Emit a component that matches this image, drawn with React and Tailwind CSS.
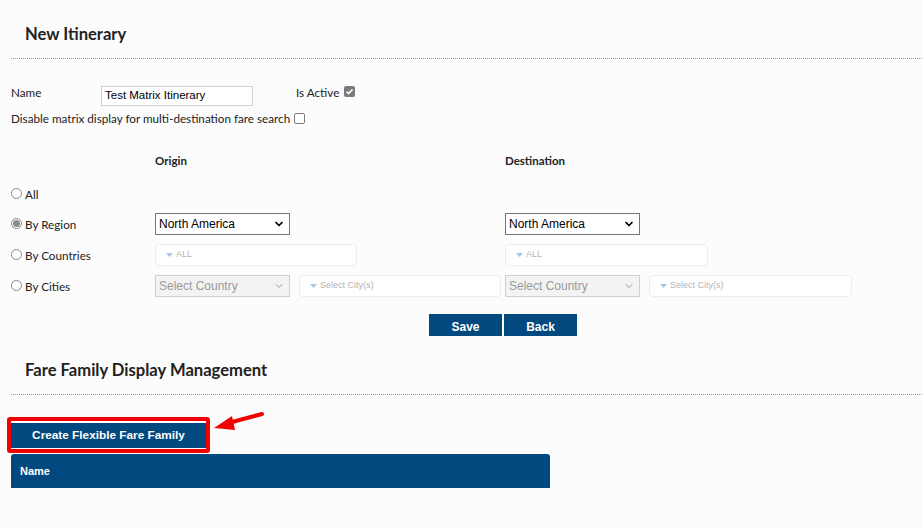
import { ChevronDown } from 'lucide-react';

const lato = { fontFamily: 'Lato, "Open Sans", sans-serif' };
const arial = { fontFamily: '"Liberation Sans", Arial, sans-serif' };

function Radio({ checked }) {
  return (
    <span className="w-[11px] h-[11px] rounded-full border border-[#8a8a8a] bg-white flex items-center justify-center shrink-0">
      {checked && <span className="w-[7px] h-[7px] rounded-full bg-[#8c8c8c]" />}
    </span>
  );
}

function Check({ checked }) {
  if (checked) {
    return (
      <span className="w-[11px] h-[11px] rounded-[2px] bg-[#7b7b7b] flex items-center justify-center shrink-0">
        <svg width="9" height="9" viewBox="0 0 10 10">
          <path d="M1.8 5.2 L4 7.4 L8.4 2.6" fill="none" stroke="white" strokeWidth="1.8" />
        </svg>
      </span>
    );
  }
  return <span className="w-[11px] h-[11px] rounded-[2px] border border-[#7b7b7b] bg-white shrink-0" />;
}

function Select({ value, disabled }) {
  return (
    <div
      style={arial}
      className={
        disabled
          ? 'w-[135px] h-[22px] border border-[#cfcfcf] bg-[#f3f3f3] flex items-center justify-between pl-[3px] pr-[4px] text-[12px] text-[#9a9a9a]'
          : 'w-[135px] h-[22px] border border-[#767676] bg-white flex items-center justify-between pl-[3px] pr-[4px] text-[12px] text-black'
      }
    >
      <span>{value}</span>
      <ChevronDown size={12} strokeWidth={disabled ? 2 : 3.5} className={disabled ? 'text-[#9a9a9a]' : 'text-black'} />
    </div>
  );
}

function Multi({ text, w }) {
  return (
    <div style={arial} className={`${w} h-[22px] border border-[#ececec] rounded-[4px] bg-white flex items-center pl-[10px] gap-[3px] text-[9px] text-[#b4b4b4]`}>
      <svg width="7" height="5" viewBox="0 0 7 5">
        <path d="M0 0 H7 L3.5 4 Z" fill="#a8c6e6" />
      </svg>
      <span>{text}</span>
    </div>
  );
}

function Row({ label, checked, top, children }) {
  return (
    <div className={`flex items-center h-[22px] ${top}`}>
      <div className="w-[144px] flex items-center gap-[3px] text-[11.7px] text-[#222]">
        <Radio checked={checked} />
        <span className="mt-[2px]">{label}</span>
      </div>
      {children}
    </div>
  );
}

export default function App() {
  return (
    <div style={lato} className="relative w-[922px] h-[529px] bg-[#fcfcfc] overflow-hidden text-[#222]">
      {/* New Itinerary */}
      <h2 className="pl-[25px] pt-[24px] text-[16.6px] leading-[20px] font-bold text-[#222]">New Itinerary</h2>
      <div className="ml-[11px] mt-[14px] border-t border-dotted border-[#9a9a9a]" />

      <div className="pl-[11px]">
        <div className="flex items-start mt-[27px] h-[20px]">
          <span className="w-[90px] text-[11.7px] leading-[16px] -mt-[2px]">Name</span>
          <div style={arial} className="w-[152px] h-[20px] border border-[#cfcfcf] bg-white flex items-center pl-[3px] text-[11.5px] text-black">
            Test Matrix Itinerary
          </div>
          <div className="ml-[43px] flex items-center gap-[5px] text-[11.7px] leading-[12px] -mt-[1px]">
            <span className="mt-[1px]">Is Active</span>
            <Check checked />
          </div>
        </div>
        <div className="flex items-center gap-[4px] mt-[6px] text-[11.7px] leading-[12px]">
          <span>Disable matrix display for multi-destination fare search</span>
          <Check />
        </div>

        {/* Origin / Destination */}
        <div className="flex mt-[29px] h-[16px] items-center text-[11.5px] font-bold">
          <span className="w-[144px]" />
          <span className="w-[350px]">Origin</span>
          <span>Destination</span>
        </div>

        <Row label="All" top="mt-[14px]" />

        <Row label="By Region" checked top="mt-[8px]">
          <div className="w-[350px]">
            <Select value="North America" />
          </div>
          <Select value="North America" />
        </Row>

        <Row label="By Countries" top="mt-[9px]">
          <div className="w-[350px]">
            <Multi text="ALL" w="w-[202px]" />
          </div>
          <Multi text="ALL" w="w-[203px]" />
        </Row>

        <Row label="By Cities" top="mt-[9px]">
          <div className="w-[350px] flex gap-[9px]">
            <Select value="Select Country" disabled />
            <Multi text="Select City(s)" w="w-[202px]" />
          </div>
          <div className="flex gap-[9px]">
            <Select value="Select Country" disabled />
            <Multi text="Select City(s)" w="w-[203px]" />
          </div>
        </Row>

        <div style={arial} className="flex gap-[2px] mt-[17px] ml-[418px] text-[12px] font-bold text-white">
          <button className="w-[73px] h-[22px] bg-[#02497f] pt-[4px]">Save</button>
          <button className="w-[73px] h-[22px] bg-[#02497f] pt-[4px]">Back</button>
        </div>
      </div>

      {/* Fare Family Display Management */}
      <h2 className="pl-[25px] mt-[24px] text-[16.6px] leading-[20px] font-bold text-[#222]">Fare Family Display Management</h2>
      <div className="ml-[11px] mt-[14px] border-t border-dotted border-[#9a9a9a]" />

      <div className="ml-[7px] mt-[22px] w-[203px] h-[36px] border-[4px] border-[#f20000] rounded-[3px] bg-white">
        <button style={arial} className="w-full h-[25px] bg-[#02497f] text-white text-[11.8px] font-bold">
          Create Flexible Fare Family
        </button>
      </div>

      <div className="ml-[11px] mt-[1px] w-[539px] h-[34px] bg-[#02497f] rounded-t-[3px] flex items-center pl-[9px]">
        <span style={arial} className="text-white text-[11px] font-bold">Name</span>
      </div>

      {/* annotation arrow */}
      <svg className="absolute left-[210px] top-[408px]" width="60" height="28" viewBox="0 0 60 28">
        <path d="M52 6 L22 14" stroke="#f20000" strokeWidth="4" strokeLinecap="round" />
        <path d="M4 20 L22 8 L25 22 Z" fill="#f20000" />
      </svg>
    </div>
  );
}
